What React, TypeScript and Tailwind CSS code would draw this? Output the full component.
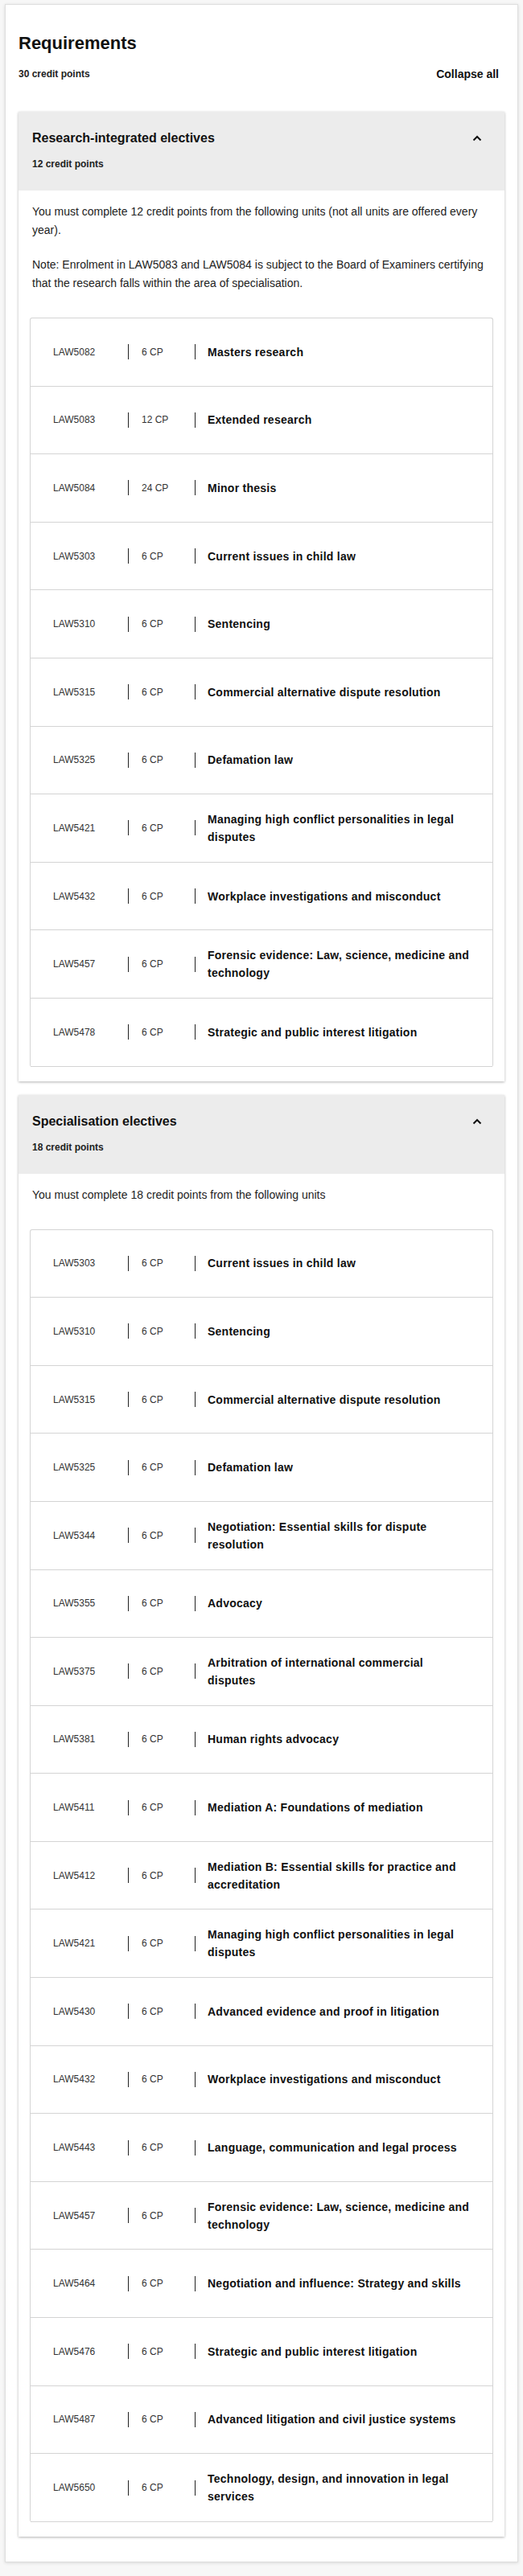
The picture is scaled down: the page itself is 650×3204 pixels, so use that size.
type Unit = { code: string; cp: string; title: string };

const researchUnits: Unit[] = [
  { code: "LAW5082", cp: "6 CP", title: "Masters research" },
  { code: "LAW5083", cp: "12 CP", title: "Extended research" },
  { code: "LAW5084", cp: "24 CP", title: "Minor thesis" },
  { code: "LAW5303", cp: "6 CP", title: "Current issues in child law" },
  { code: "LAW5310", cp: "6 CP", title: "Sentencing" },
  { code: "LAW5315", cp: "6 CP", title: "Commercial alternative dispute resolution" },
  { code: "LAW5325", cp: "6 CP", title: "Defamation law" },
  { code: "LAW5421", cp: "6 CP", title: "Managing high conflict personalities in legal disputes" },
  { code: "LAW5432", cp: "6 CP", title: "Workplace investigations and misconduct" },
  { code: "LAW5457", cp: "6 CP", title: "Forensic evidence: Law, science, medicine and technology" },
  { code: "LAW5478", cp: "6 CP", title: "Strategic and public interest litigation" },
];

const specialisationUnits: Unit[] = [
  { code: "LAW5303", cp: "6 CP", title: "Current issues in child law" },
  { code: "LAW5310", cp: "6 CP", title: "Sentencing" },
  { code: "LAW5315", cp: "6 CP", title: "Commercial alternative dispute resolution" },
  { code: "LAW5325", cp: "6 CP", title: "Defamation law" },
  { code: "LAW5344", cp: "6 CP", title: "Negotiation: Essential skills for dispute resolution" },
  { code: "LAW5355", cp: "6 CP", title: "Advocacy" },
  { code: "LAW5375", cp: "6 CP", title: "Arbitration of international commercial disputes" },
  { code: "LAW5381", cp: "6 CP", title: "Human rights advocacy" },
  { code: "LAW5411", cp: "6 CP", title: "Mediation A: Foundations of mediation" },
  { code: "LAW5412", cp: "6 CP", title: "Mediation B: Essential skills for practice and accreditation" },
  { code: "LAW5421", cp: "6 CP", title: "Managing high conflict personalities in legal disputes" },
  { code: "LAW5430", cp: "6 CP", title: "Advanced evidence and proof in litigation" },
  { code: "LAW5432", cp: "6 CP", title: "Workplace investigations and misconduct" },
  { code: "LAW5443", cp: "6 CP", title: "Language, communication and legal process" },
  { code: "LAW5457", cp: "6 CP", title: "Forensic evidence: Law, science, medicine and technology" },
  { code: "LAW5464", cp: "6 CP", title: "Negotiation and influence: Strategy and skills" },
  { code: "LAW5476", cp: "6 CP", title: "Strategic and public interest litigation" },
  { code: "LAW5487", cp: "6 CP", title: "Advanced litigation and civil justice systems" },
  { code: "LAW5650", cp: "6 CP", title: "Technology, design, and innovation in legal services" },
];

const ChevronUp = () => (
  <svg width="12" height="8" viewBox="0 0 12 8" fill="none" className="shrink-0">
    <polyline points="1.5,6.5 6,2 10.5,6.5" stroke="#111" strokeWidth="2" />
  </svg>
);

const UnitRow = ({ unit }: { unit: Unit }) => (
  <li className="flex h-[84.6px] items-center border-b border-[#d4d4d4] px-[28px]">
    <span className="w-[93px] shrink-0 text-[12px] text-[#333]">{unit.code}</span>
    <span className="h-[19px] w-px shrink-0 bg-[#222]" />
    <span className="w-[82px] shrink-0 pl-[16px] text-[12px] text-[#333]">{unit.cp}</span>
    <span className="h-[19px] w-px shrink-0 bg-[#222]" />
    <span className="flex-1 pl-[15px] text-[14px] font-bold leading-[22px] tracking-[0.25px] text-[#111]">
      {unit.title}
    </span>
  </li>
);

const Section = ({
  title,
  credits,
  notes,
  units,
}: {
  title: string;
  credits: string;
  notes: string[];
  units: Unit[];
}) => (
  <section className="bg-white shadow-[0_1px_3px_rgba(0,0,0,0.3)]">
    <div className="bg-[#ececec] pb-[24px] pl-[17px] pr-[28px] pt-[21px]">
      <div className="flex items-center justify-between">
        <h3 className="text-[16px] font-bold leading-[24px] text-[#111]">{title}</h3>
        <ChevronUp />
      </div>
      <p className="mt-[11px] text-[12px] font-bold leading-[18px] text-[#222]">{credits}</p>
    </div>
    <div className="flex flex-col px-[14px] pb-[18px] pt-[15px]">
      <div className="flex flex-col gap-[20px] px-[3px]">
        {notes.map((n, i) => (
          <p key={i} className="text-[14px] leading-[23px] text-[#222]">
            {n}
          </p>
        ))}
      </div>
      <ul className="mt-[31px] rounded-[3px] border-x border-t border-[#d4d4d4]">
        {units.map((u, i) => (
          <UnitRow key={i} unit={u} />
        ))}
      </ul>
    </div>
  </section>
);

export default function App() {
  return (
    <div className="min-h-[3204px] bg-[#f7f7f7] pt-[5px] font-['Liberation_Sans',Arial,sans-serif]">
      <div className="mx-[6px] border border-[#dedede] bg-white px-4 pb-[31px] pt-[34px] shadow-[0_1px_4px_rgba(0,0,0,0.12)]">
        <h2 className="text-[22px] font-bold leading-[28px] text-[#111]">Requirements</h2>
        <div className="mt-[15px] flex items-center justify-between">
          <span className="text-[12px] font-bold leading-[18px] text-[#222]">30 credit points</span>
          <button className="mr-[7px] text-[14px] font-bold leading-[18px] text-[#111]">Collapse all</button>
        </div>
        <div className="mt-[38px] flex flex-col gap-[17px]">
          <Section
            title="Research-integrated electives"
            credits="12 credit points"
            notes={[
              "You must complete 12 credit points from the following units (not all units are offered every year).",
              "Note: Enrolment in LAW5083 and LAW5084 is subject to the Board of Examiners certifying that the research falls within the area of specialisation.",
            ]}
            units={researchUnits}
          />
          <Section
            title="Specialisation electives"
            credits="18 credit points"
            notes={["You must complete 18 credit points from the following units"]}
            units={specialisationUnits}
          />
        </div>
      </div>
    </div>
  );
}
